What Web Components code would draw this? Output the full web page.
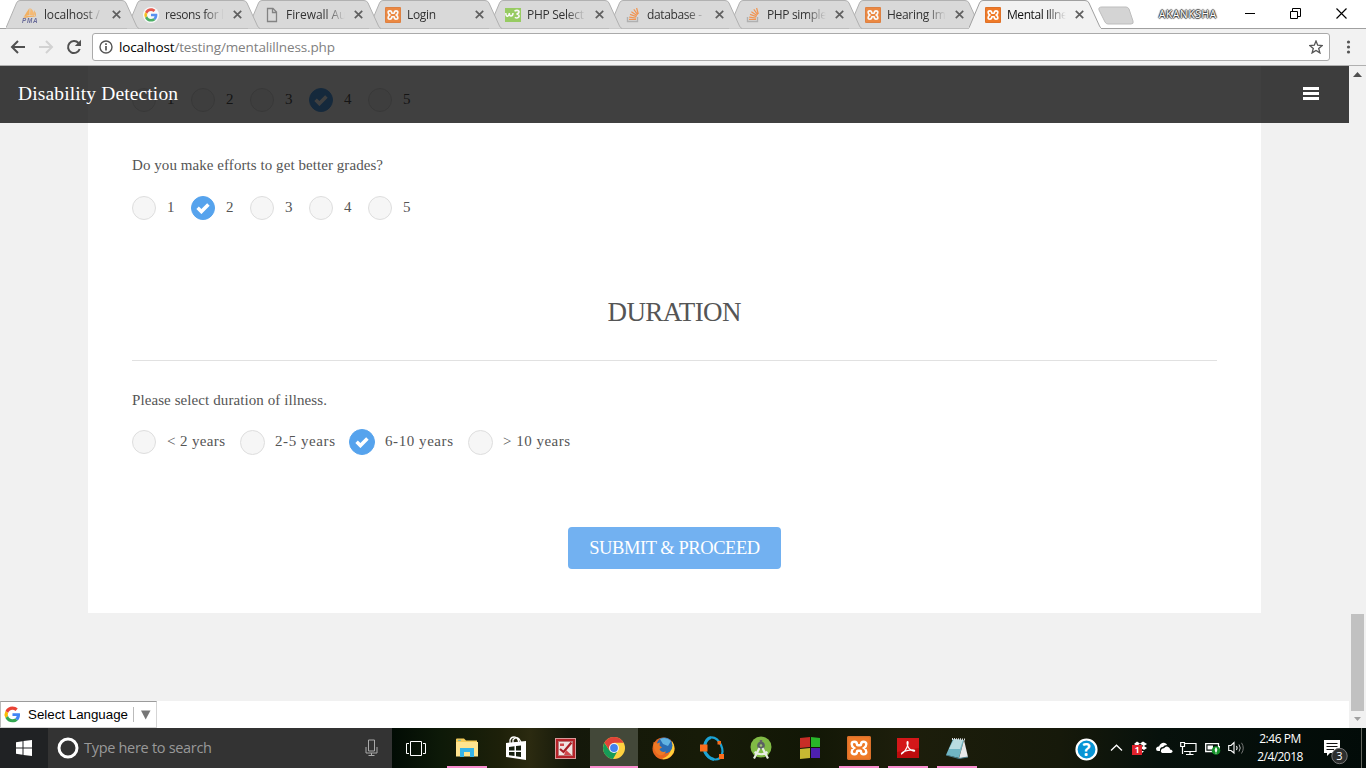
<!DOCTYPE html>
<html lang="en">
<head>
<meta charset="utf-8">
<title>Mental Illness</title>
<style>
html,body{margin:0;padding:0;width:1366px;height:768px;overflow:hidden;background:#fff}
</style>
</head>
<body>
<desktop-screen></desktop-screen>
<script>
const icons = {
pma:`<svg width="16" height="16" viewBox="0 0 16 16"><path d="M7.500 1Q4.500 5 2 9.500L7.500 8Z" fill="#f7a94c"/><path d="M8.500 1Q13 5 12 9L7.800 8Z" fill="#f9b464"/><path d="M12 3Q14.500 6 14 9L12.500 8.500Z" fill="#f7a94c"/><path d="M1 10Q8 7.500 15 9.700Q8 9.500 3 11Z" fill="#f7a94c"/><text x="0" y="16" font-family="Liberation Sans" font-size="6.300" font-weight="bold" font-style="italic" fill="#56588f" textLength="15.500">PMA</text></svg>`,
google:`<svg width="16" height="16" viewBox="0 0 48 48"><circle cx="24" cy="24" r="24" fill="#fff"/><g transform="translate(4 4) scale(.83)"><path fill="#ea4335" d="M24 9.500c3.500 0 6.700 1.200 9.200 3.600l6.900-6.900C35.900 2.400 30.500 0 24 0 14.600 0 6.500 5.400 2.600 13.200l8 6.200C12.400 13.700 17.700 9.500 24 9.500z"/><path fill="#4285f4" d="M47 24.500c0-1.600-.2-3.100-.4-4.500H24v9h12.900c-.6 3-2.200 5.500-4.700 7.200l7.700 6C44.400 38 47 31.800 47 24.500z"/><path fill="#fbbc05" d="M10.500 28.600A14.500 14.500 0 0 1 10.500 19.400l-8-6.200a24 24 0 0 0 0 21.600z"/><path fill="#34a853" d="M24 48c6.500 0 11.900-2.100 15.900-5.800l-7.700-6c-2.200 1.500-4.900 2.300-8.200 2.300-6.300 0-11.600-4.200-13.500-9.900l-8 6.200C6.500 42.600 14.600 48 24 48z"/></g></svg>`,
page:`<svg width="16" height="16" viewBox="0 0 16 16"><path d="M3.500 1.500H9L12.500 5V14.500H3.500ZM8.500 1.500V5.500H12.500" fill="none" stroke="#757575" stroke-width="1.300"/></svg>`,
xampp:`<svg width="16" height="16" viewBox="0 0 24 24"><rect width="24" height="24" rx="2" fill="#ef7a28"/><rect x=".7" y=".7" width="22.600" height="22.600" rx="1.500" fill="none" stroke="#d8702c" stroke-width="1.200"/><path d="M7.500 5.800Q4.700 5.800 4.700 8Q4.700 10.500 7 12Q4.700 13.500 4.700 16Q4.700 18.200 7.500 18.200Q10 18.200 10 15.500Q10 14.700 10.800 14.700H13.200Q14 14.700 14 15.500Q14 18.200 16.500 18.200Q19.300 18.200 19.300 16Q19.300 13.500 17 12Q19.300 10.500 19.300 8Q19.300 5.800 16.500 5.800Q14 5.800 14 8.500Q14 9.300 13.200 9.300H10.800Q10 9.300 10 8.500Q10 5.800 7.500 5.800Z" fill="none" stroke="#fff" stroke-width="2.400"/></svg>`,
w3:`<svg width="16" height="16" viewBox="0 0 16 16"><rect y="1" width="16" height="14" fill="#8cc94e"/><path d="M.8 6Q1 10 3 9Q4.300 8 4.300 6Q4.300 9 6 9Q8 8.800 8 6M9.500 4Q12.500 2.600 14 4.300Q14.200 6.500 11.500 7Q14.500 7.500 14 9.800Q12.500 11.800 9.800 10.300" fill="none" stroke="#fff" stroke-width="1.500"/></svg>`,
stack:`<svg width="16" height="16" viewBox="0 0 16 16"><path d="M2.500 10V14.500H12.500V10" fill="none" stroke="#aaa" stroke-width="1.400"/><path d="M4 12.400H11M4.200 10.100L11 11M5 7.400L11.500 9.700M6.400 4.700L12 8.600M8.800 2.300L12.700 7.600M11.600 1L13.300 7" stroke="#f58a3c" stroke-width="1.250"/></svg>`,
close:`<svg width="9" height="9" viewBox="0 0 9 9"><path d="M.8.8L8.200 8.200M8.200.8L.8 8.200" stroke="#5f5f5f" stroke-width="1.700"/></svg>`,
check:`<svg width="14" height="12" viewBox="0 0 14 12"><path d="M1.600 5.800L5.400 9.600L12.400 2.500" fill="none" stroke="currentColor" stroke-width="3.500"/></svg>`,
task:`<svg width="20" height="15" viewBox="0 0 20 15"><path d="M4.500.5H15.500V14.500H4.500ZM3 2.500H.5V12.500H3M17 2.500H19.500V12.500H17" fill="none" stroke="#fff"/></svg>`,
folder:`<svg width="22" height="20" viewBox="0 0 22 20"><path d="M0 1.500Q0 .5 1 .5H8L10 2.500H21V18H0Z" fill="#f5cb58"/><path d="M0 4H22V18.500H0Z" fill="#ffe48f"/><path d="M2 2.300H5" stroke="#6bb" /><path d="M4 19V10H18V19H14V14H8V19Z" fill="#37b4e8"/></svg>`,
store:`<svg width="22" height="25" viewBox="0 0 22 25"><path d="M5 8V4Q6 1 9 1Q13 1 14 7M8 7V4Q11 0 14 3L16 6" stroke="#fff" stroke-width="1.300" fill="none"/><path d="M1 7L21 5V24L1 21Z" fill="#fff"/><path d="M4 11L9.500 10.300V14.500H4ZM11 10L16 9.400V14.500H11ZM4 16H9.500V20L4 19.200ZM11 16H16V21L11 20.200Z" fill="#17200f"/></svg>`,
red:`<svg width="21" height="21" viewBox="0 0 21 21"><rect x=".5" y=".5" width="20" height="20" fill="#b42228" stroke="#d69a9a"/><rect x="3.500" y="3.500" width="14" height="14" fill="#f0e4e2" stroke="#b77"/><path d="M5 11L8.500 14L16.500 4.500" stroke="#a91d24" stroke-width="2.200" fill="none"/><path d="M5 5.500H9V8H5ZM11 12L16.500 17H9Z" fill="#d0484b"/></svg>`,
chrome:`<svg width="22" height="22" viewBox="0 0 22 22"><circle cx="11" cy="11" r="11" fill="#ffd140"/><path d="M11 11L6.500 13.500L1.400 5.700A11 11 0 0 0 10 22L14 15Z" fill="#179b58"/><path d="M1.400 5.600A11 11 0 0 1 20.600 5.700H11L6.500 13.500Z" fill="#e04338"/><circle cx="11" cy="11" r="5" fill="#f5f5f5"/><circle cx="11" cy="11" r="3.900" fill="#4382ed"/></svg>`,
firefox:`<svg width="23" height="23" viewBox="0 0 23 23"><circle cx="11.500" cy="11.500" r="11" fill="#e8661f"/><path d="M20 4Q24 10 21.500 16Q17 23 10 22Q18 19 19 12Z" fill="#ffcf3a"/><circle cx="12.500" cy="8.500" r="8" fill="#2a6db4"/><path d="M8 2Q14-1 19 4L16 9L11 7Z" fill="#62b3e2"/><path d="M1.500 5L5 6.500L8 5.500L7.500 8.500L10 10.500L7.500 12Q9 16 14 14.500Q12 19 7 18Q1 15 1.500 5Z" fill="#ee7a26"/></svg>`,
octave:`<svg width="25" height="25" viewBox="0 0 25 25"><path d="M4.500 10Q6 2.500 11 1.500Q17 1 21 9Q24.500 17 20 22Q16 25 10 22Q6 19.500 4.500 15" fill="none" stroke="#1ba3d5" stroke-width="2.200"/><path d="M4.500 10Q6 2.500 11 1.500M4.500 15Q8 22.500 14 23.500" fill="none" stroke="#1ba3d5" stroke-width="3"/><path d="M0 8.500H7.500V15.500H0ZM17.500 5H21V8.500H17.500ZM19 18H24V23H19Z" fill="#fa6d1c"/></svg>`,
android:`<svg width="22" height="24" viewBox="0 0 22 24"><circle cx="11" cy="11" r="10.500" fill="#80ba45"/><path d="M11 4V7" stroke="#666" stroke-width="2.500"/><circle cx="11" cy="9.500" r="3.800" fill="#5b6063"/><circle cx="11" cy="9.500" r="1.300" fill="#9ec66f"/><path d="M9.500 12L4 22.500M12.500 12L18 22.500M4.500 16Q11 20.500 17.500 16" fill="none" stroke="#e8ede3" stroke-width="2.200"/></svg>`,
blocks:`<svg width="22" height="24" viewBox="0 0 22 24"><path d="M1 2L11 1V11L1 12Z" fill="#c82d26"/><path d="M12 1L21 2V11H12Z" fill="#28b629"/><path d="M1 13L11 12V22L1 23Z" fill="#c6b832"/><path d="M12 12H21V22L12 22Z" fill="#4d20ae"/></svg>`,
acrobat:`<svg width="22" height="21" viewBox="0 0 22 21"><path d="M0 0H22V20H0Z" fill="#bd0c0d"/><path d="M0 0H22V10L0 14Z" fill="#d41719"/><path d="M4.500 16Q9 13 10.800 7Q11.500 3.500 10.500 3.500Q9.500 4 10.500 7.500Q12 12 17 13.300Q18.500 13 17 12Q12 11.500 7 13.500Q4 15 4.500 16Z" fill="none" stroke="#fff" stroke-width="1.100"/></svg>`,
note:`<svg width="24" height="23" viewBox="0 0 24 23"><path d="M8 2L19 3L14 21L1 18Z" fill="#70b5c3"/><path d="M9 2L18 3L15 12L4 12Z" fill="#b9dce0"/><path d="M19 3L23 20L14 21.500Z" fill="#e9e9e9"/><path d="M7 2L20 2.500" stroke="#ddd" stroke-width="2" stroke-dasharray="1 1"/><path d="M1 18L14 21.500L23 20" fill="none" stroke="#487a87"/></svg>`,
help:`<svg width="23" height="23" viewBox="0 0 23 23"><circle cx="11.500" cy="11.500" r="10" fill="#0894d5" stroke="#fff" stroke-width="2.200"/><text x="11.500" y="17.500" text-anchor="middle" fill="#fff" font-family="Open Sans" font-weight="bold" font-size="17">?</text></svg>`,
chev:`<svg width="13" height="8" viewBox="0 0 13 8"><path d="M1 6.500L6.500 1.200L12 6.500" fill="none" stroke="#fff" stroke-width="1.300"/></svg>`,
dropbox:`<svg width="16" height="16" viewBox="0 0 16 16"><path d="M2 4L5 1.500L8 3.500L11 1.500L15 4L12 6L15 8L12 10L8.500 8L5 10L2 7L5 6ZM9 11L12 11L9 14Z" fill="#fff"/><path d="M8 3.500L11.500 6L8 8L5 6Z" fill="#20251b"/><path d="M0 5H10V15H0Z" fill="#e1222c"/><text x="2.800" y="13.400" fill="#fff" font-family="Open Sans" font-weight="bold" font-size="8.500">1</text></svg>`,
cloud:`<svg width="17" height="12" viewBox="0 0 17 12"><path d="M2 9Q0 9 0 6.500Q1 4 3 4.500Q5 0 9 1Q11 2 11 3Q8 3 7 5Q3.500 5 4 9Z" fill="#fff"/><path d="M6 11Q4.200 10 5 8Q6 6 8 6.300Q10 3 13 5.500Q14 6 14 7.500Q17 8 16.500 10L15 11Z" fill="#fff"/></svg>`,
net:`<svg width="17" height="15" viewBox="0 0 17 15"><path d="M5 2.500H16V10.500H4M10 11V13.500M6 13.500H13.500M.7 1.500H4.500V5.500H.7ZM2.500 6V13" fill="none" stroke="#fff" stroke-width="1.200"/></svg>`,
battery:`<svg width="16" height="13" viewBox="0 0 16 13"><path d="M.7 1.700H13.500V9.500H.7Z" fill="none" stroke="#fff" stroke-width="1.300"/><path d="M2.500 3.500H8V7.500H2.500ZM14 4H15V7H14Z" fill="#fff"/><circle cx="11" cy="8.500" r="4.300" fill="#139128"/><path d="M11 5.500Q13 8 11 10Q9 8 11 5.500M11 9V12" fill="#fff" stroke="#fff" stroke-width=".6"/></svg>`,
sound:`<svg width="17" height="14" viewBox="0 0 17 14"><path d="M.7 4.500H3L6 1.500V12L3 9.500H.7ZM8.500 5Q9.800 7 8.500 9" fill="none" stroke="#fff" stroke-width="1.100"/><path d="M11 3.500Q13.500 7 11 10.500" fill="none" stroke="#bbb"/><path d="M13.500 1.800Q17 7 13.500 12.500" fill="none" stroke="#777"/></svg>`,
notice:`<svg width="24" height="25" viewBox="0 0 24 25"><path d="M0 0H16V13H6L3 16V13H0Z" fill="#fff"/><path d="M2.500 3.500H13.500M2.500 6.500H13.500M2.500 9.500H10" stroke="#111"/><circle cx="15.500" cy="16" r="7.700" fill="#2c2e2e" stroke="#777"/><text x="15.500" y="20" text-anchor="middle" fill="#fff" font-family="Open Sans" font-size="11">3</text></svg>`
};

function component(name, render, after) {
  customElements.define(name, class extends HTMLElement {
    connectedCallback() {
      if (this.shadowRoot) return;
      this.attachShadow({mode:'open'}).innerHTML = render(this);
      if (after) after(this);
    }
  });
}
const A = (el, key, fallback='') => el.getAttribute(key) ?? fallback;

component('ui-icon', el => `<style>:host{display:block;flex:none;line-height:0}svg{display:block;${el.hasAttribute('size') ? `width:${A(el,'size')}px;height:${A(el,'size')}px` : ''}}</style>${icons[A(el,'name')]}`);

component('browser-tab', el => {
  const active = el.hasAttribute('active');
  return `<style>
  :host{display:block;position:relative;flex:none;width:134px;height:29px;margin-right:${A(el,'overlap','-14')}px;z-index:${A(el,'z')}}
  .shape{position:absolute;inset:0}
  .body{position:relative;display:flex;align-items:center;height:29px;padding:0 18px 0 16px}
  ui-icon{opacity:${active?1:.85}}
  .label{width:60px;margin-left:6px;overflow:hidden;white-space:nowrap;font:12px/18px "Open Sans",sans-serif;color:${active?'#111':'#333'};-webkit-mask:linear-gradient(90deg,#000 66%,transparent 98%)}
  .close{margin-left:8px;opacity:1}
  </style><svg class="shape" width="134" height="29"><path d="M-1 ${active?29:28.500}Q0 28 .8 26L10.500 3Q11.500.5 14 .5H116Q119 .5 120 3L130.500 26Q131.500 28 133 ${active?29:28.500}" fill="${active?'#f2f2f2':'#d9d9d9'}" stroke="${active?'#a0a0a0':'#b1b1b1'}"/></svg>
  <div class="body"><ui-icon name="${A(el,'icon')}"></ui-icon><div class="label"><fit-text w="${A(el,'w')}"><slot></slot></fit-text></div><ui-icon class="close" name="close"></ui-icon></div>`;
});

component('browser-chrome', () => `<style>
  :host{display:block;height:66px;background:#f2f2f2;font-family:"Open Sans",sans-serif}
  .strip{display:flex;height:29px;padding-left:6px;background:#fff;box-shadow:inset 0 -1px #a0a0a0;box-sizing:border-box;isolation:isolate}
  .new{margin:6px 0 0 9px;flex:none}
  .user{margin:5px 0 0 25px;width:58px;font-size:10px;line-height:18px;color:#fff;text-shadow:0 1px 1px #333,1px 0 1px #333,-1px 0 1px #333,0 -1px 1px #333}
  .controls{display:flex;margin-left:28px;padding-top:8px;gap:35px}
  .controls svg{display:block}
  .bar{display:flex;align-items:center;height:37px;border-bottom:1px solid #b0b0b0;box-sizing:border-box;padding:0 0 0 10px}
  .bar>svg{flex:none}
  .address{display:flex;align-items:center;box-sizing:border-box;width:1238px;height:28px;margin-left:10px;border:1px solid #aaa;border-radius:3px;background:#fff;padding:0 6px;font-size:13.500px;color:#808080}
  .url{margin-left:6px;flex:1;line-height:20px}.url b{font-weight:400;color:#000}
  </style>
  <div class="strip">
  <browser-tab icon="pma" w="56" z="9" overlap="-13">localhost /</browser-tab>
  <browser-tab icon="google" w="59" z="8" overlap="-13">resons for l</browser-tab>
  <browser-tab icon="page" w="72" z="7" overlap="-13">Firewall Auth</browser-tab>
  <browser-tab icon="xampp" w="29" z="6">Login</browser-tab>
  <browser-tab icon="w3" w="57" z="5">PHP Select</browser-tab>
  <browser-tab icon="stack" w="55" z="4">database -</browser-tab>
  <browser-tab icon="stack" w="60" z="3">PHP simple</browser-tab>
  <browser-tab icon="xampp" w="66" z="2">Hearing Imp</browser-tab>
  <browser-tab icon="xampp" w="66" z="10" active>Mental Illnes</browser-tab>
  <svg class="new" width="36" height="19"><path d="M4 1H28Q30 1 31 3L35 15Q36 18 33 18H10Q8 18 7 16L1 4Q0 1 4 1Z" fill="#d4d4d4" stroke="#bdbdbd"/></svg>
  <div class="user"><fit-text w="57">AKANKSHA</fit-text></div>
  <div class="controls"><svg width="10" height="11"><path d="M0 5.500H10" stroke="#000"/></svg><svg width="11" height="11"><path d="M.5 3.500H7.500V10.500H.5ZM2.500 3V.5H10.500V8.500H8" fill="none" stroke="#000"/></svg><svg width="11" height="11"><path d="M.5.500L10.500 10.500M10.500.5L.5 10.500" stroke="#000" stroke-width="1.150"/></svg></div>
  </div>
  <div class="bar">
  <svg width="16" height="16" viewBox="0 0 16 16"><path d="M15 8H2M8 2L2 8L8 14" fill="none" stroke="#505050" stroke-width="2"/></svg>
  <svg style="margin-left:12px" width="16" height="16" viewBox="0 0 16 16"><path d="M1 8H14M8 2L14 8L8 14" fill="none" stroke="#d2d2d2" stroke-width="2"/></svg>
  <svg style="margin-left:12px" width="16" height="16" viewBox="0 0 16 16"><path d="M13.700 10A6 6 0 1 1 12.500 4" fill="none" stroke="#505050" stroke-width="2"/><path d="M15 .8V7H8.800Z" fill="#505050"/></svg>
  <div class="address"><svg width="14" height="14" viewBox="0 0 14 14"><circle cx="7" cy="7" r="6" fill="none" stroke="#555" stroke-width="1.400"/><path d="M7 6V10.500M7 3.200V4.900" stroke="#555" stroke-width="1.700"/></svg>
  <div class="url"><fit-text w="216"><b>localhost</b>/testing/mentalillness.php</fit-text></div>
  <svg width="14" height="14" viewBox="0 0 14 14"><path d="M7 1L8.700 5.200L13.200 5.500L9.700 8.400L10.900 12.900L7 10.400L3.100 12.900L4.300 8.400L.8 5.500L5.300 5.200Z" fill="none" stroke="#555" stroke-width="1.300"/></svg></div>
  <svg style="margin-left:16px" width="5" height="14"><g fill="#555"><circle cx="2.500" cy="2" r="1.600"/><circle cx="2.500" cy="7" r="1.600"/><circle cx="2.500" cy="12" r="1.600"/></g></svg>
  </div>`);

component('choice-option', el => {
  const s = A(el,'size','24'), on = el.hasAttribute('checked');
  return `<style>:host{display:flex;align-items:center;height:26px;margin-right:${A(el,'gap','16')}px}
  .dot{display:flex;align-items:center;justify-content:center;box-sizing:border-box;flex:none;width:${s}px;height:${s}px;border-radius:50%;border:1px solid ${on?'#56a3ed':'#dedede'};background:${on?'#56a3ed':'#f6f6f6'};color:#fff}
  .text{margin-left:${A(el,'lead','11')}px;line-height:20px;margin-top:-2px}</style>
  <span class="dot">${on?'<ui-icon name="check"></ui-icon>':''}</span><div class="text"><fit-text w="${A(el,'w','8')}"><slot></slot></fit-text></div>`;
});
component('choice-row', () => `<style>:host{display:flex;align-items:center;height:24px;font-size:15px}</style><slot></slot>`);

component('site-header', () => `<style>:host{position:absolute;left:0;top:0;width:1349px;height:57px;box-sizing:border-box;display:flex;align-items:center;justify-content:space-between;padding:0 30px 2px 18px;background:rgba(0,0,0,.75);color:#fff;font-size:19.500px}
  svg{display:block}</style><fit-text w="160">Disability Detection</fit-text><svg width="16" height="13"><path d="M0 1.500H16M0 6.500H16M0 11.500H16" stroke="#fff" stroke-width="3"/></svg>`);

component('translate-box', () => `<style>:host{display:flex;align-items:center;box-sizing:border-box;width:157px;height:27px;border:1px solid #d5d5d5;border-top-color:#9b9b9b;border-left-color:#bbb;background:#fff;padding-left:2px;color:#000;font:13.330px/16px "Liberation Sans",sans-serif}
  .t{margin-left:6px}.line{width:1px;height:15px;background:#bbb;margin:0 7px 0 5px}</style><ui-icon name="google" size="19"></ui-icon><div class="t"><fit-text w="100">Select Language</fit-text></div><span class="line"></span><svg width="10" height="10"><path d="M0 .5H9.500L4.700 9.500Z" fill="#767676"/></svg>`);

component('page-view', () => `<style>
  :host{display:flex;position:relative;height:662px;font-family:"Liberation Serif",serif;color:#555}
  .page{width:1349px}
  .grey{background:#f1f1f1;height:635px;padding:0 88px;box-sizing:border-box}
  .card{background:#fff;height:547px;padding:22px 44px 0;box-sizing:border-box}
  .q{font-size:15px;line-height:20px}
  h2{display:flex;justify-content:center;margin:72px 0 28px;font-size:27px;line-height:40px;font-weight:400}
  .rule{height:1px;background:#e1e1e1}
  button{display:flex;align-items:center;justify-content:center;width:213px;height:42px;border:0;border-radius:4px;margin:73px auto 0;padding:0;background:#72b1f1;color:#fff;font:18.500px/24px "Liberation Serif",serif}
  .scroll{display:flex;flex-direction:column;align-items:center;width:17px;background:#f1f1f1}
  .thumb{width:13px;height:97px;background:#c1c1c1;margin-top:535px}
  </style>
  <div class="page"><div class="grey"><div class="card">
  <choice-row><choice-option>1</choice-option><choice-option>2</choice-option><choice-option>3</choice-option><choice-option checked>4</choice-option><choice-option>5</choice-option></choice-row>
  <div class="q" style="margin:43px 0 21px"><fit-text w="251">Do you make efforts to get better grades?</fit-text></div>
  <choice-row><choice-option>1</choice-option><choice-option checked>2</choice-option><choice-option>3</choice-option><choice-option>4</choice-option><choice-option>5</choice-option></choice-row>
  <h2><fit-text w="134">DURATION</fit-text></h2><div class="rule"></div>
  <div class="q" style="margin:29px 0 20px"><fit-text w="195">Please select duration of illness.</fit-text></div>
  <choice-row><choice-option w="58" gap="15">&lt; 2 years</choice-option><choice-option w="60" gap="14" size="25" lead="10">2-5 years</choice-option><choice-option w="68" gap="15" size="26" lead="10" checked>6-10 years</choice-option><choice-option w="67" size="25" lead="10">&gt; 10 years</choice-option></choice-row>
  <button><fit-text w="171">SUBMIT &amp; PROCEED</fit-text></button>
  </div></div><translate-box></translate-box></div>
  <div class="scroll"><svg width="9" height="13"><path d="M0 11L4.500 6L9 11Z" fill="#505050"/></svg><div class="thumb"></div><svg width="7" height="12" style="margin-top:1px"><path d="M0 5L3.500 9L7 5Z" fill="#a0a0a0"/></svg></div>
  <site-header></site-header>`);

component('task-button', el => `<style>:host{display:flex;align-items:center;justify-content:center;position:relative;box-sizing:border-box;width:48px;height:40px;flex:none;${el.hasAttribute('active')?'background:#434839;':''}}
  ${el.hasAttribute('open')?`:host::after{content:"";position:absolute;bottom:0;height:2px;left:${el.hasAttribute('active')?0:4}px;right:${el.hasAttribute('active')?0:4}px;background:#f98dce}`:''}</style><ui-icon name="${A(el,'icon')}" ${el.hasAttribute('size')?`size="${A(el,'size')}"`:''}></ui-icon>`);

component('task-bar', () => `<style>
  :host{display:flex;height:40px;color:#fff;font-family:"Open Sans",sans-serif;background:linear-gradient(90deg,#010b04 390px,#0d1908 440px,#1d2009 500px,#2b2a10 530px,#14180a 570px,#171b08 700px,#121706 810px,#1d1e0b 900px,#16190a 1060px,#07110c 1160px,#020b08 1366px)}
  .start{display:flex;align-items:center;justify-content:center;width:48px;background:#202224}
  .search{display:flex;align-items:center;width:344px;box-sizing:border-box;background:#333;padding:0 14px 0 9px;color:#999;font-size:14.500px}
  .words{margin:0 auto 0 5px;line-height:22px}
  .apps{display:flex;gap:1px;margin-left:3px}
  .tray{display:flex;align-items:center;margin-left:auto}
  .clock{width:48px;margin-left:11px;text-align:center;font-size:12px;line-height:18px;padding-bottom:1px;display:flex;flex-direction:column;align-items:center}
  .edge{width:1px;height:40px;background:#64675f;margin:0 4px 0 2px}
  </style><div class="start"><svg width="16" height="16"><path d="M0 2.200L6.500 1.300V7.500H0ZM7.500 1.100L16 0V7.500H7.500ZM0 8.500H6.500V14.700L0 13.800ZM7.500 8.500H16V16L7.500 14.900Z" fill="#fff"/></svg></div>
  <div class="search"><svg width="22" height="22"><circle cx="11" cy="11" r="9" fill="none" stroke="#fff" stroke-width="3"/></svg><div class="words"><fit-text w="128">Type here to search</fit-text></div><svg width="13" height="18"><path d="M3.500 1H9.500V12H3.500ZM1 8V14H12V8M6.500 14V17M3.500 16.500H9.500" fill="none" stroke="#aaa"/></svg></div>
  <task-button icon="task"></task-button>
  <div class="apps"><task-button icon="folder" open></task-button><task-button icon="store"></task-button><task-button icon="red"></task-button><task-button icon="chrome" active open></task-button><task-button icon="firefox"></task-button><task-button icon="octave"></task-button><task-button icon="android"></task-button><task-button icon="blocks"></task-button><task-button icon="xampp" size="24" open></task-button><task-button icon="acrobat" open></task-button><task-button icon="note" open></task-button></div>
  <div class="tray"><ui-icon name="help" style="margin-top:2px"></ui-icon><ui-icon name="chev" style="margin-left:12px"></ui-icon><ui-icon name="dropbox" style="margin-left:9px"></ui-icon><ui-icon name="cloud" style="margin-left:8px"></ui-icon><ui-icon name="net" style="margin-left:7px"></ui-icon><ui-icon name="battery" style="margin-left:8px"></ui-icon><ui-icon name="sound" style="margin-left:7px"></ui-icon><div class="clock"><fit-text w="42">2:46 PM</fit-text><fit-text w="46">2/4/2018</fit-text></div><ui-icon name="notice" style="margin:8px 11px 0 20px"></ui-icon><span class="edge"></span></div>`);

component('desktop-screen', () => `<style>:host{display:flex;flex-direction:column;width:1366px;height:768px;overflow:hidden}</style><browser-chrome></browser-chrome><page-view></page-view><task-bar></task-bar>`);

/* Spaces the letters so that a line takes exactly the width it is given. */
component('fit-text', el => `<style>:host{display:block;width:${A(el,'w')}px;white-space:nowrap}span{display:inline-block;white-space:nowrap}</style><span><slot></slot></span>`, el => {
  const span = el.shadowRoot.querySelector('span');
  let text = el.textContent;
  const inner = el.querySelector('slot');
  if (inner) text = inner.assignedNodes().map(n => n.textContent).join('');
  const count = text.trim().length;
  if (count > 1) span.style.letterSpacing = ((+A(el,'w') - span.getBoundingClientRect().width) / (count - 1)).toFixed(3) + 'px';
});
</script>
</body>
</html>
